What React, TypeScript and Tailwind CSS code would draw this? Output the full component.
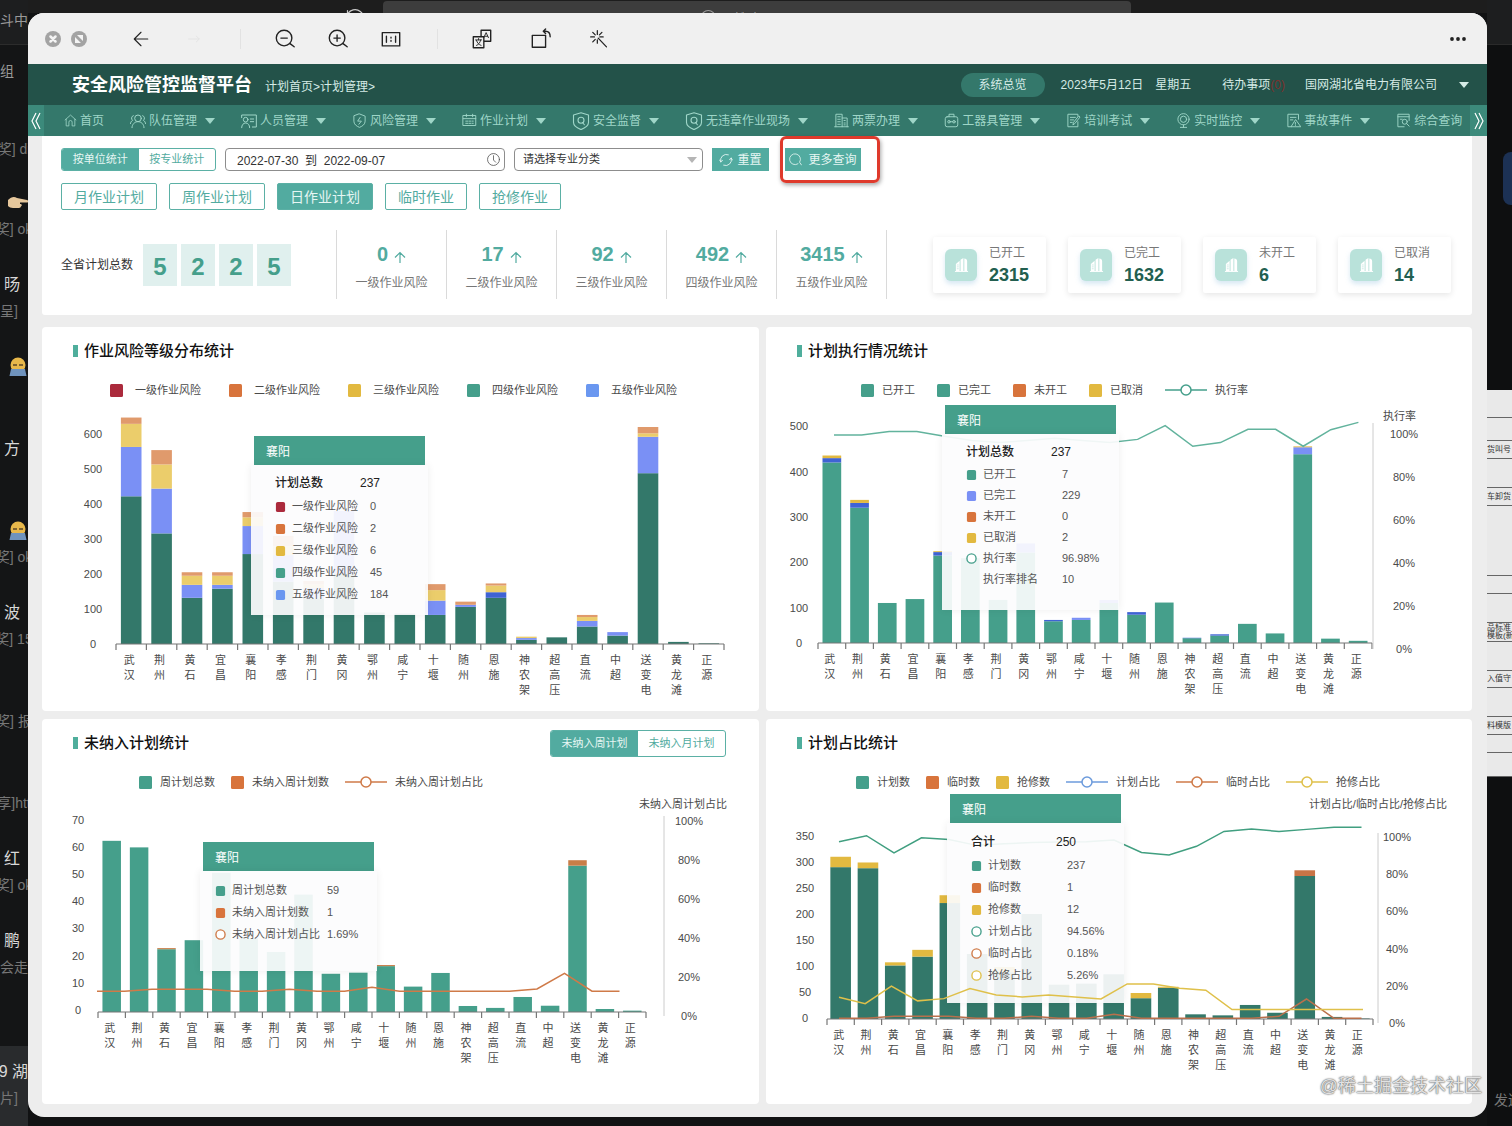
import type { ReactNode } from 'react'

const CITIES = [
  '武汉', '荆州', '黄石', '宜昌', '襄阳', '孝感', '荆门', '黄冈', '鄂州', '咸宁',
  '十堰', '随州', '恩施', '神农架', '超高压', '直流', '中超', '送变电', '黄龙滩', '正源',
]

const TEAL = '#459f8b'
const PINE = '#33786a'
const BLUE = '#7a90f5'
const NAVY = '#3f63d4'
const SAND = '#ebcd6b'
const PEACH = '#e09a6c'
const YELLOW = '#e2b940'
const ORANGE = '#d8743c'

/* ---------- icons ---------- */

function Icon({ children, className }: { children: ReactNode; className: string }) {
  return (
    <svg
      viewBox="0 0 24 24"
      className={className}
      fill="none"
      stroke="currentColor"
      strokeWidth={1.5}
      strokeLinecap="round"
      strokeLinejoin="round"
      aria-hidden="true"
    >
      {children}
    </svg>
  )
}

function Caret({ className }: { className: string }) {
  return (
    <svg viewBox="0 0 10 6" className={className} fill="currentColor" aria-hidden="true">
      <path d="M0 0h10L5 6z" />
    </svg>
  )
}

const NAV_ICONS: Record<string, ReactNode> = {
  home: <path d="M2 11 12 2l10 9M4 9.500V22h5v-7a3 3 0 0 1 6 0v7h5V9.500" />,
  team: (
    <>
      <circle cx="12" cy="8" r="5" />
      <path d="M3 22c0-5 4-9 9-9s9 4 9 9M5 4a4 4 0 0 0-1 7c-2 1-3 3-3.500 5M19 4a4 4 0 0 1 1 7c2 1 3 3 3.500 5" />
    </>
  ),
  staff: (
    <>
      <path d="M1 7V3h22v18h-6M14 9h5M14 13h5" />
      <circle cx="7" cy="10" r="3.500" />
      <path d="M1 22c0-4 2.500-7 6-7s6 3 6 7" />
    </>
  ),
  risk: <path d="M12 1.500 21 5v8c0 5-4 8-9 10-5-2-9-5-9-10V5zM13 7l-4 6h6l-4 5" />,
  plan: <path d="M2 4h20v16H2zM2 9h20M7 2v4M17 2v4M6 13h3M11 13h3M16 13h2M6 16.500h3M11 16.500h3M16 16.500h2" />,
  guard: (
    <>
      <path d="M12 1 22 4v10c0 4-4 7-10 9.500C6 21 2 18 2 14V4z" />
      <circle cx="12" cy="11" r="4" />
      <path d="m14 14 2.500 3" />
    </>
  ),
  ticket: <path d="M3 22V2h10v20M13 8h8v14M1 22h22M6 6h4M6 10h4M6 14h4M6 18h4M16 12h2M16 16h2M16 19h2" />,
  tool: (
    <>
      <rect x="2" y="6" width="20" height="16" rx="3" />
      <path d="M8 6V2h8v4M10 14h4" />
      <circle cx="8" cy="14" r="2" />
      <circle cx="16" cy="14" r="2" />
    </>
  ),
  exam: <path d="M19 14v8H3V2h16v3M7 7h8M7 11h5M7 15h3M22 7l-8 10-3 2 1-4 8-10z" />,
  camera: (
    <>
      <circle cx="12" cy="10" r="9" />
      <circle cx="12" cy="10" r="5" />
      <path d="M7 23h10M12 19v4" />
    </>
  ),
  accident: <path d="M20 10V2H3v20h5M7 7h9M7 11h4M15 11 8 22h15zM15 15v3M15 20v0" />,
  search: (
    <>
      <path d="M21 12V2H3v20h10M3 6h18M7 10h3" />
      <circle cx="14" cy="14" r="4" />
      <path d="m17 17 4 4" />
    </>
  ),
}

const NAV = [
  { label: '首页', icon: 'home', size: 'w-[13px]' },
  { label: '队伍管理', icon: 'team', size: 'w-4' },
  { label: '人员管理', icon: 'staff', size: 'w-4' },
  { label: '风险管理', icon: 'risk', size: 'w-[15px]' },
  { label: '作业计划', icon: 'plan', size: 'w-[15px]' },
  { label: '安全监督', icon: 'guard', size: 'w-[18px]' },
  { label: '无违章作业现场', icon: 'guard', size: 'w-[18px]' },
  { label: '两票办理', icon: 'ticket', size: 'w-[15px]' },
  { label: '工器具管理', icon: 'tool', size: 'w-[15px]' },
  { label: '培训考试', icon: 'exam', size: 'w-[15px]' },
  { label: '实时监控', icon: 'camera', size: 'w-[15px]' },
  { label: '事故事件', icon: 'accident', size: 'w-[15px]' },
  { label: '综合查询', icon: 'search', size: 'w-[15px]' },
]

/* ---------- window chrome ---------- */

function Toolbar() {
  const btn = 'flex size-8 shrink-0 items-center justify-center'
  return (
    <div className="flex h-[51px] items-center bg-[#f0f0f0] pr-[13px] pl-[17px] text-[#222]">
      <button aria-label="关闭" className="size-4 shrink-0 rounded-full bg-[#a3a3a3] text-[#f4f4f4]">
        <svg viewBox="0 0 16 16" stroke="currentColor" strokeWidth="2.500" strokeLinecap="round">
          <path d="m5.500 5.500 5 5M10.500 5.500l-5 5" />
        </svg>
      </button>
      <button aria-label="全屏" className="ml-[10px] size-4 shrink-0 rounded-full bg-[#a3a3a3] text-[#f4f4f4]">
        <svg viewBox="0 0 16 16" fill="currentColor">
          <path d="M4 6v6h6zM6 4h6v6z" />
        </svg>
      </button>
      <button aria-label="上一张" className={`${btn} ml-[38px]`}>
        <Icon className="size-[18px]"><path d="M21 12H3M12 3l-9 9 9 9" /></Icon>
      </button>
      <button aria-label="下一张" className={`${btn} ml-[21px] text-[#e2e2e2]`}>
        <Icon className="size-[14px]"><path d="M3 12h18M16 7l5 5-5 5" /></Icon>
      </button>
      <span className="ml-[30px] h-5 w-px bg-[#e2e2e2]" />
      <button aria-label="缩小" className={`${btn} ml-7`}>
        <Icon className="size-[22px]"><circle cx="11" cy="11" r="8.500" /><path d="M7.500 11h7M17.500 17l4.500 3.500" /></Icon>
      </button>
      <button aria-label="放大" className={`${btn} ml-[21px]`}>
        <Icon className="size-[22px]"><circle cx="11" cy="11" r="8.500" /><path d="M7.500 11h7M11 7.500v7M17.500 17l4.500 3.500" /></Icon>
      </button>
      <button aria-label="原始大小" className={`${btn} ml-[21px]`}>
        <Icon className="size-[22px]"><path d="M2.500 5h19v14.500h-19zM7 9v6.500M17 9v6.500M12 10v1M12 13.500v1" /></Icon>
      </button>
      <span className="ml-[30px] h-5 w-px bg-[#e2e2e2]" />
      <button aria-label="翻译" className={`${btn} ml-7`}>
        <Icon className="size-[22px]">
          <path d="M11 9V2.500h10.500v12H14M2.500 9.500H14v12H2.500z" />
          <path strokeWidth="1" d="M14 10.500l2.500-5.500 2.500 5.500M15 9h3M5 13h6.500M8.250 11.500V13M6 19c2.500-1 4-3 4.500-6M6 13.500c.8 3 2.500 4.500 5 5.500" />
        </Icon>
      </button>
      <button aria-label="旋转" className={`${btn} ml-[27px]`}>
        <Icon className="size-[22px]"><path d="M2.500 8H17v13H2.500zM14.500 3.500h2.500c3 0 5 2 5 6M17 1l-2.500 2.500L17 6" /></Icon>
      </button>
      <button aria-label="美化" className={`${btn} ml-[26px]`}>
        <Icon className="size-[20px]"><path d="m11 11 10 10.500M10 2v4.500M10 13v4M2 9.500h4.500M13 9.500h4M4.500 4 7.500 7M15.500 4l-3 3M4.500 15.500l3-3" /></Icon>
      </button>
      <button aria-label="更多" className={`${btn} ml-auto`}>
        <svg viewBox="0 0 16 4" className="w-4" fill="currentColor">
          <circle cx="2" cy="2" r="1.900" /><circle cx="8" cy="2" r="1.900" /><circle cx="14" cy="2" r="1.900" />
        </svg>
      </button>
    </div>
  )
}

function Header() {
  return (
    <header className="flex h-[41px] items-center bg-[#235249] pr-[18px] pl-11 text-xs text-[#d5ebe6]">
      <h1 className="text-lg font-bold text-white">安全风险管控监督平台</h1>
      <p className="mt-1 ml-[13px]">计划首页&gt;计划管理&gt;</p>
      <button className="ml-auto h-6 rounded-full bg-[#34786b] px-[18px]">系统总览</button>
      <span className="ml-4">2023年5月12日</span>
      <span className="ml-3">星期五</span>
      <a href="#todo" className="ml-[31px]">
        待办事项<span className="text-[#7d302c]">(0)</span>
      </a>
      <button className="ml-5 flex items-center gap-[22px]">
        国网湖北省电力有限公司
        <Caret className="w-[10px]" />
      </button>
    </header>
  )
}

function NavBar() {
  return (
    <nav className="flex h-[31px] bg-[#34786b] text-xs text-[#9fd6c8]">
      <button aria-label="向左" className="flex w-4 shrink-0 items-center justify-center bg-[#3c8a7b] text-white">
        <svg viewBox="0 0 10 18" className="h-[18px]" fill="none" stroke="currentColor" strokeWidth="1.200">
          <path d="M5 1 1 9l4 8M9 1 5 9l4 8" />
        </svg>
      </button>
      <ul className="flex min-w-0 flex-1 items-center gap-[26px] overflow-hidden pl-5">
        {NAV.map((item, i) => (
          <li key={item.label} className="shrink-0">
            <a href="#nav" className="flex items-center whitespace-nowrap">
              <Icon className={`${item.size} mr-[3px]`}>{NAV_ICONS[item.icon]}</Icon>
              {item.label}
              {i > 0 && <Caret className="ml-2 w-[10px]" />}
            </a>
          </li>
        ))}
      </ul>
      <button aria-label="向右" className="flex w-[17px] shrink-0 items-center justify-center bg-[#3c8a7b] text-white">
        <svg viewBox="0 0 10 18" className="h-[18px]" fill="none" stroke="currentColor" strokeWidth="1.200">
          <path d="m1 1 4 8-4 8M5 1l4 8-4 8" />
        </svg>
      </button>
    </nav>
  )
}

/* ---------- filters and totals ---------- */

const PLAN_TABS = ['月作业计划', '周作业计划', '日作业计划', '临时作业', '抢修作业']

const RISKS = [
  { label: '一级作业风险', value: 0 },
  { label: '二级作业风险', value: 17 },
  { label: '三级作业风险', value: 92 },
  { label: '四级作业风险', value: 492 },
  { label: '五级作业风险', value: 3415 },
]

const STATUSES = [
  { label: '已开工', value: 2315 },
  { label: '已完工', value: 1632 },
  { label: '未开工', value: 6 },
  { label: '已取消', value: 14 },
]

function Filters() {
  return (
    <section className="rounded-b-[3px] bg-white pt-3 pr-[21px] pb-4 pl-[19px]">
      <div className="flex h-[23px] items-stretch gap-[9px] text-[11px]">
        <div className="flex w-[155px] overflow-hidden rounded-[3px] border border-[#5bb0a5]">
          <button className="flex-1 bg-[#52aba0] text-[#e6f6f3]">按单位统计</button>
          <button className="flex-1 text-[#52aba0]">按专业统计</button>
        </div>
        <div className="relative w-[280px]">
          <input
            aria-label="日期范围"
            defaultValue="2022-07-30  到  2022-09-07"
            className="size-full rounded-[4px] border border-[#8d8d8d] px-[11px] text-xs text-[#333]"
          />
          <Icon className="absolute top-[5px] right-[5px] size-[13px] text-[#555]">
            <circle cx="12" cy="12" r="11" />
            <path d="M12 5v8l4 4" />
          </Icon>
        </div>
        <div className="relative w-[189px]">
          <select aria-label="专业分类" className="size-full appearance-none rounded-[4px] border border-[#8d8d8d] px-2 text-[11px] text-[#333]">
            <option>请选择专业分类</option>
          </select>
          <Caret className="absolute top-[9px] right-[6px] w-[10px] text-[#b5b5b5]" />
        </div>
        <button className="flex w-[57px] items-center justify-center gap-1 bg-[#52aba0] text-xs text-[#e6f6f3]">
          <Icon className="size-[14px]"><path d="M3 15a10 10 0 0 1 13-12M21 9A10 10 0 0 1 8 21M3 15l-2-3M3 15l3-2M21 9l2 3M21 9l-3 2" /></Icon>
          重置
        </button>
        <div className="relative ml-[7px] flex">
          <button className="flex w-[76px] items-center justify-center gap-[6px] bg-[#52aba0] text-xs text-[#e6f6f3]">
            <Icon className="size-[13px]"><path d="M16.500 20a10 10 0 1 1 3-3L23 22" /></Icon>
            更多查询
          </button>
          <span className="pointer-events-none absolute -top-[12px] -right-[19px] -bottom-[12px] -left-[5px] rounded-md border-[3px] border-[#df3a2c] shadow-[1px_2px_4px_rgba(0,0,0,0.35)]" />
        </div>
      </div>

      <div className="mt-3 flex h-[27px] gap-3 text-sm">
        {PLAN_TABS.map((tab) => (
          <button
            key={tab}
            className={`rounded-[2px] border border-[#5bb0a5] px-3 ${tab === '日作业计划' ? 'bg-[#52aba0] text-[#e6f6f3]' : 'text-[#52aba0]'}`}
          >
            {tab}
          </button>
        ))}
      </div>

      <div className="mt-5 flex h-[69px] items-center">
        <p className="w-[82px] text-xs text-[#333]">全省计划总数</p>
        <div className="flex gap-1">
          {['5', '2', '2', '5'].map((digit, i) => (
            <span key={i} className="flex h-[42px] w-[34px] items-center justify-center bg-[#e0f0ee] pt-1 text-2xl font-bold text-[#459f8b]">
              {digit}
            </span>
          ))}
        </div>
        <ul className="ml-[45px] flex h-full border-l border-[#dadada]">
          {RISKS.map((risk) => (
            <li key={risk.label} className="flex w-[110px] flex-col items-center border-r border-[#dadada] pt-3">
              <span className="flex items-center gap-[6px] text-xl leading-6 font-bold text-[#52aba0]">
                {risk.value}
                <svg viewBox="0 0 12 12" className="mt-[6px] size-3" fill="none" stroke="currentColor" strokeWidth="1.200" aria-hidden="true">
                  <path d="M6 12V1.500M1 6.500l5-5 5 5" />
                </svg>
              </span>
              <span className="mt-2 text-xs leading-[18px] text-[#777]">{risk.label}</span>
            </li>
          ))}
        </ul>
        <ul className="ml-auto flex gap-[22px]">
          {STATUSES.map((status) => (
            <li key={status.label} className="flex h-14 w-[113px] items-center gap-3 rounded-[2px] bg-white pl-3 shadow-[0_2px_6px_rgba(0,0,0,0.1)]">
              <span className="flex size-8 items-center justify-center rounded-md bg-[#b9e2da] text-white shadow-[0_3px_5px_rgba(140,190,220,0.35)]">
                <svg viewBox="0 0 16 16" className="size-[15px]" fill="currentColor" aria-hidden="true">
                  <path d="M2 7.500 6 4v11H2zM7 3l3-2v14H7zM11 1.500c1.800 0 3 1 3 3V15h-3z" />
                  <path d="M1 15.500h14" stroke="currentColor" />
                  <path d="M3 8.500h2M3 10.500h2M3 12.500h2" stroke="#b9e2da" strokeWidth=".7" />
                </svg>
              </span>
              <span>
                <span className="block text-xs leading-5 text-[#777]">{status.label}</span>
                <span className="block text-lg leading-6 font-bold text-[#235f50]">{status.value}</span>
              </span>
            </li>
          ))}
        </ul>
      </div>
    </section>
  )
}

/* ---------- charts ---------- */

interface LineSeries {
  color: string
  values: number[]
  start: number
  step: number
  front?: boolean
}

interface ChartProps {
  width: number
  height: number
  // left end of the category axis, its height, and the width of one category
  x0: number
  base: number
  step: number
  barWidth: number
  unit: number
  ticks: { value: number; y: number }[]
  tickX: number
  colors: string[]
  bars: number[][]
  lines?: LineSeries[]
  rightAxis?: { x: number; labelX: number; top: number; base: number; unit: number; title: string; titleX: number; titleY: number }
  children?: ReactNode
}

function evenTicks(count: number, every: number, base: number, gap: number) {
  return Array.from({ length: count }, (_, i) => ({ value: i * every, y: base - i * gap }))
}

function Chart(props: ChartProps) {
  const { width, height, x0, base, step, barWidth, unit, ticks, tickX, colors, bars, lines = [], rightAxis, children } = props
  const viewBox = `0 0 ${width} ${height}`

  const drawLine = (line: LineSeries, i: number) => (
    <polyline
      key={i}
      fill="none"
      stroke={line.color}
      strokeWidth="1.500"
      points={line.values
        .map((v, k) => `${line.start + k * line.step},${(rightAxis?.base ?? base) - v * (rightAxis?.unit ?? 1)}`)
        .join(' ')}
    />
  )

  return (
    <div className="relative mt-px">
      <svg viewBox={viewBox} className="block w-full text-[11px]" fill="#4a4a4a">
        {ticks.map((tick) => (
          <text key={tick.value} x={tickX} y={tick.y} textAnchor="middle" dominantBaseline="central">
            {tick.value}
          </text>
        ))}
        {bars.map((parts, i) => {
          let y = base
          return parts.map((v, k) => {
            y -= v * unit
            return <rect key={`${i}-${k}`} x={x0 + step * (i + 0.5) - barWidth / 2} y={y} width={barWidth} height={v * unit} fill={colors[k]} />
          })
        })}
        <path
          d={`M${x0} ${base}H${x0 + step * 20}${Array.from({ length: 21 }, (_, i) => `M${x0 + step * i} ${base}v6`).join('')}`}
          stroke="#777"
          strokeWidth="1.200"
          fill="none"
        />
        {CITIES.map((city, i) =>
          city.split('').map((char, k) => (
            <text key={city + k} x={x0 + step * (i + 0.5) - 2} y={base + 16 + k * 15} textAnchor="middle" dominantBaseline="central">
              {char}
            </text>
          )),
        )}
        {rightAxis && (
          <>
            <path d={`M${rightAxis.x} ${rightAxis.top}V${rightAxis.base}`} stroke="#ccc" />
            <text x={rightAxis.titleX} y={rightAxis.titleY} textAnchor="end" dominantBaseline="central">
              {rightAxis.title}
            </text>
            {[0, 20, 40, 60, 80, 100].map((pct) => (
              <text key={pct} x={rightAxis.labelX} y={rightAxis.base - pct * rightAxis.unit} textAnchor="middle" dominantBaseline="central">
                {pct}%
              </text>
            ))}
          </>
        )}
        {lines.filter((line) => !line.front).map(drawLine)}
      </svg>
      {children}
      <svg viewBox={viewBox} className="pointer-events-none absolute inset-0 w-full">
        {lines.filter((line) => line.front).map(drawLine)}
      </svg>
    </div>
  )
}

interface LegendItem {
  label: string
  color: string
  line?: boolean
}

function Legend({ items, className }: { items: LegendItem[]; className: string }) {
  return (
    <ul className={`mt-[18px] flex h-[18px] items-center text-[11px] whitespace-nowrap text-[#4a4a4a] ${className}`}>
      {items.map((item) => (
        <li key={item.label} className="flex items-center gap-2">
          <LegendMark {...item} />
          {item.label}
        </li>
      ))}
    </ul>
  )
}

function LegendMark({ color, line }: LegendItem) {
  if (line) {
    return (
      <svg viewBox="0 0 42 14" className="w-[42px] shrink-0" stroke={color} strokeWidth="1.500">
        <path d="M0 7h42" />
        <circle cx="21" cy="7" r="5" fill="#fff" />
      </svg>
    )
  }
  return (
    <svg viewBox="0 0 13 13" className="w-[13px] shrink-0" fill={color}>
      <rect width="13" height="13" rx="1.500" />
    </svg>
  )
}

interface TipRow {
  label: string
  value: string
  color?: string
  ring?: boolean
}

interface TipProps {
  rows: TipRow[]
  total?: { label: string; value: string }
  className: string
  bodyClass: string
  valueX: string
  rowClass: string
}

function Tip({ rows, total, className, bodyClass, valueX, rowClass }: TipProps) {
  return (
    <div className={`absolute w-[177px] text-[11px] text-[#555] ${className}`}>
      <div className="mx-[3px] flex h-[29px] items-center bg-[#459f8b] pt-[2px] pl-3 text-xs text-white">襄阳</div>
      <div className={`bg-[#fcfcfd]/92 shadow-[0_0_8px_rgba(0,0,0,0.07)] ${bodyClass}`}>
        {total && (
          <div className="flex h-6 items-center text-xs font-medium text-[#222]">
            <span className="w-[85px]">{total.label}</span>
            <span>{total.value}</span>
          </div>
        )}
        {rows.map((row) => (
          <div key={row.label} className={`flex items-center whitespace-nowrap ${rowClass}`}>
            <svg viewBox="0 0 12 12" className="mr-[6px] w-[11px] shrink-0">
              {row.ring && <circle cx="6" cy="6" r="5" fill="#fff" stroke={row.color} strokeWidth="1.500" />}
              {row.color && !row.ring && <rect x="1" y="1" width="10" height="11" rx="2" fill={row.color} />}
            </svg>
            <span className={valueX}>{row.label}</span>
            <span>{row.value}</span>
          </div>
        ))}
      </div>
    </div>
  )
}

function Card({ title, extra, children }: { title: string; extra?: ReactNode; children: ReactNode }) {
  return (
    <section className="min-w-0 rounded-[4px] bg-white pt-3">
      <div className="flex h-6 items-center pr-[33px] pl-[31px]">
        <span className="h-3 w-[5px] bg-[#4fae9c]" />
        <h2 className="ml-[6px] text-[15px] font-medium text-[#111]">{title}</h2>
        {extra}
      </div>
      {children}
    </section>
  )
}

const RISK_LEGEND = [
  { label: '一级作业风险', color: '#ab2a3c' },
  { label: '二级作业风险', color: ORANGE },
  { label: '三级作业风险', color: YELLOW },
  { label: '四级作业风险', color: TEAL },
  { label: '五级作业风险', color: '#6a97f0' },
]

function RiskCard() {
  return (
    <Card title="作业风险等级分布统计">
      <Legend items={RISK_LEGEND} className="gap-7 pl-[68px] [&>li]:gap-3" />
      <Chart
        width={717}
        height={311}
        x0={74}
        base={244}
        step={30.4}
        barWidth={20.6}
        unit={0.35}
        ticks={evenTicks(7, 100, 244, 35)}
        tickX={51}
        colors={[PINE, BLUE, NAVY, SAND, PEACH]}
        bars={[
          [422, 141, 0, 66, 18], [316, 128, 0, 69, 41], [132, 37, 0, 26, 10], [158, 11, 0, 26, 10], [257, 80, 0, 25, 15],
          [178, 76, 0, 25, 30], [130, 30, 0, 10, 10], [200, 180, 0, 0, 0], [90, 0, 0, 0, 0], [87, 0, 0, 0, 0],
          [83, 41, 0, 30, 17], [106, 6, 0, 0, 9], [132, 0, 16, 19, 6], [12, 5, 0, 4, 0], [19, 0, 0, 0, 0],
          [50, 16, 0, 11, 6], [24, 10, 0, 0, 0], [488, 104, 0, 10, 18], [6, 0, 0, 0, 0], [2, 0, 0, 0, 0],
        ]}
      >
        <Tip
          className="top-9 left-[209px]"
          bodyClass="h-[150px] pt-[6px] pl-6"
          rowClass="h-[22px]"
          valueX="w-[78px]"
          total={{ label: '计划总数', value: '237' }}
          rows={RISK_LEGEND.map((item, i) => ({ ...item, value: ['0', '2', '6', '45', '184'][i] }))}
        />
      </Chart>
    </Card>
  )
}

function ExecutionCard() {
  return (
    <Card title="计划执行情况统计">
      <Legend
        className="gap-[22px] pl-[95px]"
        items={[
          { label: '已开工', color: TEAL },
          { label: '已完工', color: TEAL },
          { label: '未开工', color: ORANGE },
          { label: '已取消', color: YELLOW },
          { label: '执行率', color: TEAL, line: true },
        ]}
      />
      <Chart
        width={706}
        height={311}
        x0={52}
        base={243}
        step={27.7}
        barWidth={18.7}
        unit={0.435}
        ticks={[
          { value: 0, y: 243 },
          { value: 100, y: 208 },
          { value: 200, y: 162 },
          { value: 300, y: 117 },
          { value: 400, y: 72 },
          { value: 500, y: 26 },
        ]}
        tickX={33}
        colors={[TEAL, BLUE, NAVY, YELLOW]}
        bars={[
          [415, 0, 10, 6], [311, 0, 11, 7], [92], [101], [201, 0, 8, 2],
          [195], [99], [208, 21], [50, 0, 3], [53, 5],
          [92, 7], [65, 0, 6], [93], [11, 0, 1], [17, 0, 3],
          [44], [22], [434, 16, 0, 2], [10], [5],
        ]}
        lines={[
          {
            color: '#62b39d',
            start: 68,
            step: 27.6,
            values: [99.5, 99.5, 101.2, 101.2, 99, 97, 96, 97, 98, 97, 96, 97.5, 103.9, 94.3, 96, 102.2, 102.2, 94.3, 102, 105.4],
          },
        ]}
        rightAxis={{ x: 607, labelX: 638, top: 23, base: 249, unit: 2.15, title: '执行率', titleX: 650, titleY: 16 }}
      >
        <Tip
          className="top-[5px] left-[176px]"
          bodyClass="h-[176px] pt-[6px] pl-6"
          rowClass="h-[21px]"
          valueX="w-[79px]"
          total={{ label: '计划总数', value: '237' }}
          rows={[
            { label: '已开工', value: '7', color: TEAL },
            { label: '已完工', value: '229', color: BLUE },
            { label: '未开工', value: '0', color: ORANGE },
            { label: '已取消', value: '2', color: YELLOW },
            { label: '执行率', value: '96.98%', color: TEAL, ring: true },
            { label: '执行率排名', value: '10' },
          ]}
        />
      </Chart>
    </Card>
  )
}

function MissingCard() {
  return (
    <Card
      title="未纳入计划统计"
      extra={
        <div className="ml-auto flex h-[27px] w-[176px] overflow-hidden rounded-[3px] border border-[#5bb0a5] text-[11px]">
          <button className="flex-1 bg-[#52aba0] text-[#e6f6f3]">未纳入周计划</button>
          <button className="flex-1 text-[#52aba0]">未纳入月计划</button>
        </div>
      }
    >
      <Legend
        className="gap-4 pl-[97px]"
        items={[
          { label: '周计划总数', color: TEAL },
          { label: '未纳入周计划数', color: ORANGE },
          { label: '未纳入周计划占比', color: '#cf7a48', line: true },
        ]}
      />
      <Chart
        width={717}
        height={312}
        x0={56}
        base={220}
        step={27.4}
        barWidth={18.5}
        unit={2.73}
        ticks={evenTicks(8, 10, 218, 27.2)}
        tickX={36}
        colors={[TEAL, '#c97e48']}
        bars={[
          [62.7], [60.3], [23, 0.4], [26.3], [51], [27], [22], [43], [14], [14.4],
          [16.8, 0.4], [9.3], [14.3], [2.2], [1.5], [5.5], [2.3], [53.6, 2], [1.1], [0.5],
        ]}
        lines={[
          {
            color: '#cf7a48',
            start: 55,
            step: 27.5,
            values: [12.7, 12.7, 13.7, 13.7, 13.7, 12.7, 12.7, 13.7, 12.7, 12.7, 14.7, 12.7, 12.7, 12.7, 12.7, 12.7, 13.9, 21.9, 12.7, 12.7],
          },
        ]}
        rightAxis={{ x: 622, labelX: 647, top: 24, base: 224, unit: 1.95, title: '未纳入周计划占比', titleX: 685, titleY: 12 }}
      >
        <Tip
          className="top-[50px] left-[158px]"
          bodyClass="h-[100px] pt-2 pl-[15px]"
          rowClass="h-[22px]"
          valueX="w-[95px]"
          rows={[
            { label: '周计划总数', value: '59', color: TEAL },
            { label: '未纳入周计划数', value: '1', color: ORANGE },
            { label: '未纳入周计划占比', value: '1.69%', color: '#cf7a48', ring: true },
          ]}
        />
      </Chart>
    </Card>
  )
}

function RatioCard() {
  return (
    <Card title="计划占比统计">
      <Legend
        className="gap-4 pl-[90px]"
        items={[
          { label: '计划数', color: TEAL },
          { label: '临时数', color: ORANGE },
          { label: '抢修数', color: YELLOW },
          { label: '计划占比', color: '#6c9bdc', line: true },
          { label: '临时占比', color: '#cf7a48', line: true },
          { label: '抢修占比', color: '#dfc04a', line: true },
        ]}
      />
      <Chart
        width={706}
        height={312}
        x0={61}
        base={227}
        step={27.3}
        barWidth={20.6}
        unit={0.52}
        ticks={evenTicks(8, 50, 226, 26)}
        tickX={39}
        colors={[PINE, '#c97446', YELLOW]}
        bars={[
          [292, 0, 20], [290, 0, 11], [103, 0, 6], [120, 0, 13], [223, 0, 15],
          [125], [90, 0, 10], [202], [66], [68],
          [86], [40, 0, 10], [60, 0, 2], [9], [7],
          [27], [12], [275, 11], [4], [1],
        ]}
        lines={[
          {
            color: '#419f80',
            start: 73,
            step: 27.5,
            values: [97.5, 100.7, 91.5, 99.6, 98.7, 95.5, 96.4, 97, 97.3, 97.5, 98.4, 91.7, 90.3, 95, 103, 104.3, 103, 104.1, 105.2, 105.2],
          },
          {
            color: '#b9704c',
            start: 73,
            step: 27.5,
            values: [2.5, 2.5, 3.6, 3.6, 3.6, 2.5, 2.5, 3.6, 2.5, 2.5, 4.7, 2.5, 2.5, 2.5, 2.5, 2.5, 3.6, 12.9, 2.5, 2.5],
          },
          {
            color: '#dfc04a',
            start: 73,
            step: 26.2,
            front: true,
            values: [13.8, 10.4, 19.8, 11.9, 13.1, 18.5, 15.1, 14, 15.1, 14, 12.9, 21, 21, 18.7, 17.6, 7.2, 7.2, 7.2, 7.2, 7.2, 7.2],
          },
        ]}
        rightAxis={{ x: 612, labelX: 631, top: 41, base: 231, unit: 1.86, title: '计划占比/临时占比/抢修占比', titleX: 681, titleY: 12 }}
      >
        <Tip
          className="top-[2px] left-[181px]"
          bodyClass="h-[180px] pt-[7px] pl-6"
          rowClass="h-[22px]"
          valueX="w-[79px]"
          total={{ label: '合计', value: '250' }}
          rows={[
            { label: '计划数', value: '237', color: TEAL },
            { label: '临时数', value: '1', color: ORANGE },
            { label: '抢修数', value: '12', color: YELLOW },
            { label: '计划占比', value: '94.56%', color: TEAL, ring: true },
            { label: '临时占比', value: '0.18%', color: '#cf7a48', ring: true },
            { label: '抢修占比', value: '5.26%', color: '#dfc04a', ring: true },
          ]}
        />
      </Chart>
    </Card>
  )
}

/* ---------- what shows behind the window ---------- */

function Hand() {
  return (
    <svg viewBox="0 0 20 14" className="w-5" fill="#e6c79c">
      <path d="M0 4c3-3 6-4 9-2l10 2c1.500.5 1.500 2.500 0 2.500h-7v1.500h1c1 .5 1 2 0 2.300-.2 1.200-1 1.700-2 1.700H5c-2 0-4-1-5-2z" />
    </svg>
  )
}

function Coder() {
  return (
    <svg viewBox="0 0 20 20" className="w-5">
      <circle cx="10" cy="8" r="7.500" fill="#e8b84a" />
      <path d="M5 8h4M11 8h4" stroke="#5c4526" strokeWidth="1.500" />
      <path d="M3 12h14l1.500 7h-17z" fill="#6f93bd" />
    </svg>
  )
}

const CHATS: { name: ReactNode; text: string; icon?: boolean }[] = [
  { name: <Hand />, text: '奖] ok', icon: true },
  { name: '旸', text: '呈]' },
  { name: <Coder />, text: '', icon: true },
  { name: '方', text: '' },
  { name: <Coder />, text: '奖] ok', icon: true },
  { name: '波', text: '奖] 15' },
  { name: '', text: '奖] 报' },
  { name: '', text: '享]htt' },
  { name: '红', text: '奖] ok' },
  { name: '鹏', text: '会走' },
]

function ChatList() {
  return (
    <aside className="flex w-7 shrink-0 flex-col overflow-hidden bg-[#141516] text-sm whitespace-nowrap text-[#777]">
      <p className="flex h-[45px] shrink-0 items-center justify-end border-b border-[#2c2c2c] bg-[#1d1e1f] pb-1 text-[#999]">斗中</p>
      <p className="h-[52px] shrink-0 pt-4 text-[#999]">组</p>
      <p className="flex h-[92px] shrink-0 items-center justify-center pt-3">奖] di</p>
      {CHATS.map((chat, i) => (
        <div key={i} className="h-[82px] shrink-0">
          <div className={`flex h-7 items-center justify-end text-base text-[#d8d8d8] ${chat.icon ? '' : 'pr-2'}`}>{chat.name}</div>
          <p className={`flex h-6 items-center ${chat.text.length > 3 ? 'justify-center' : ''}`}>{chat.text}</p>
        </div>
      ))}
      <div className="mt-[37px] flex-1 bg-[#292b2d] pt-3">
        <div className="flex h-7 items-center justify-end text-base text-[#d8d8d8]">9 湖</div>
        <p className="flex h-6 items-center">片]</p>
      </div>
    </aside>
  )
}

const SHEET_ROWS = [
  { text: '', size: 'h-[28px]' },
  { text: '', size: 'h-[23px]' },
  { text: '货叫号', size: 'h-[18px]' },
  { text: '', size: 'h-[29px]' },
  { text: '车卸货', size: 'h-[18px]' },
  { text: '', size: 'h-[70px]' },
  { text: '', size: 'h-[18px]' },
  { text: '', size: 'h-[29px]' },
  { text: '品标准\n模板(新', size: 'h-[19px]' },
  { text: '', size: 'h-[29px]' },
  { text: '入值守', size: 'h-[17px]' },
  { text: '', size: 'h-[29px]' },
  { text: '料模版', size: 'h-[18px]' },
  { text: '', size: 'h-[18px]' },
  { text: '', size: 'h-[24px]' },
]

function RightEdge() {
  return (
    <aside className="flex w-[25px] shrink-0 flex-col overflow-hidden bg-[#0e0f10]">
      <div className="h-[45px] shrink-0 border-b border-[#2a2a2a] bg-[#1d1e1f]" />
      <div className="mt-[107px] ml-4 h-[53px] shrink-0 rounded-l-lg bg-[#1c3154]" />
      <div className="mt-[185px] bg-[#e9e9e9] text-[8px] leading-[8px] whitespace-pre text-[#333]">
        {SHEET_ROWS.map((row, i) => (
          <div key={i} className={`flex items-center overflow-hidden border-b border-[#666] ${row.size}`}>
            {row.text}
          </div>
        ))}
      </div>
      <p className="mt-auto mb-4 pl-[7px] text-sm whitespace-nowrap text-[#777]">发送</p>
    </aside>
  )
}

function DesktopStrip() {
  return (
    <div className="flex h-[13px] items-start overflow-hidden bg-[#1d1d1d] text-[#999]">
      <Icon className="mt-2 ml-[317px] size-[20px] shrink-0 text-[#ccc]">
        <path d="M3 3v5h5M3 8a10 10 0 1 1 0 8" />
      </Icon>
      <div className="mt-px ml-[18px] flex h-8 w-[748px] items-start rounded-t-[4px] bg-[#3d3d3d] pt-2 pl-[317px] text-sm leading-5">
        <Icon className="size-[18px] shrink-0"><circle cx="11" cy="11" r="9" /></Icon>
        <span className="ml-4">搜索</span>
      </div>
    </div>
  )
}

export default function App() {
  return (
    <div className="relative flex min-h-screen bg-[#111213] font-['Liberation_Sans','Noto_Sans_CJK_SC',sans-serif]">
      <ChatList />
      <div className="min-w-0 flex-1 pb-[9px]">
        <DesktopStrip />
        <div className="overflow-hidden rounded-2xl bg-[#ededed]">
          <Toolbar />
          <Header />
          <NavBar />
          <main className="pr-[15px] pb-[13px] pl-[14px]">
            <Filters />
            <div className="mt-3 grid grid-cols-[717fr_706fr] gap-x-[7px] gap-y-2">
              <RiskCard />
              <ExecutionCard />
              <MissingCard />
              <RatioCard />
            </div>
          </main>
        </div>
      </div>
      <RightEdge />
      <p className="absolute right-[30px] bottom-[26px] text-lg text-[#e2e2e2] [text-shadow:0_0_2px_#555,0_0_1px_#666]">@稀土掘金技术社区</p>
    </div>
  )
}
